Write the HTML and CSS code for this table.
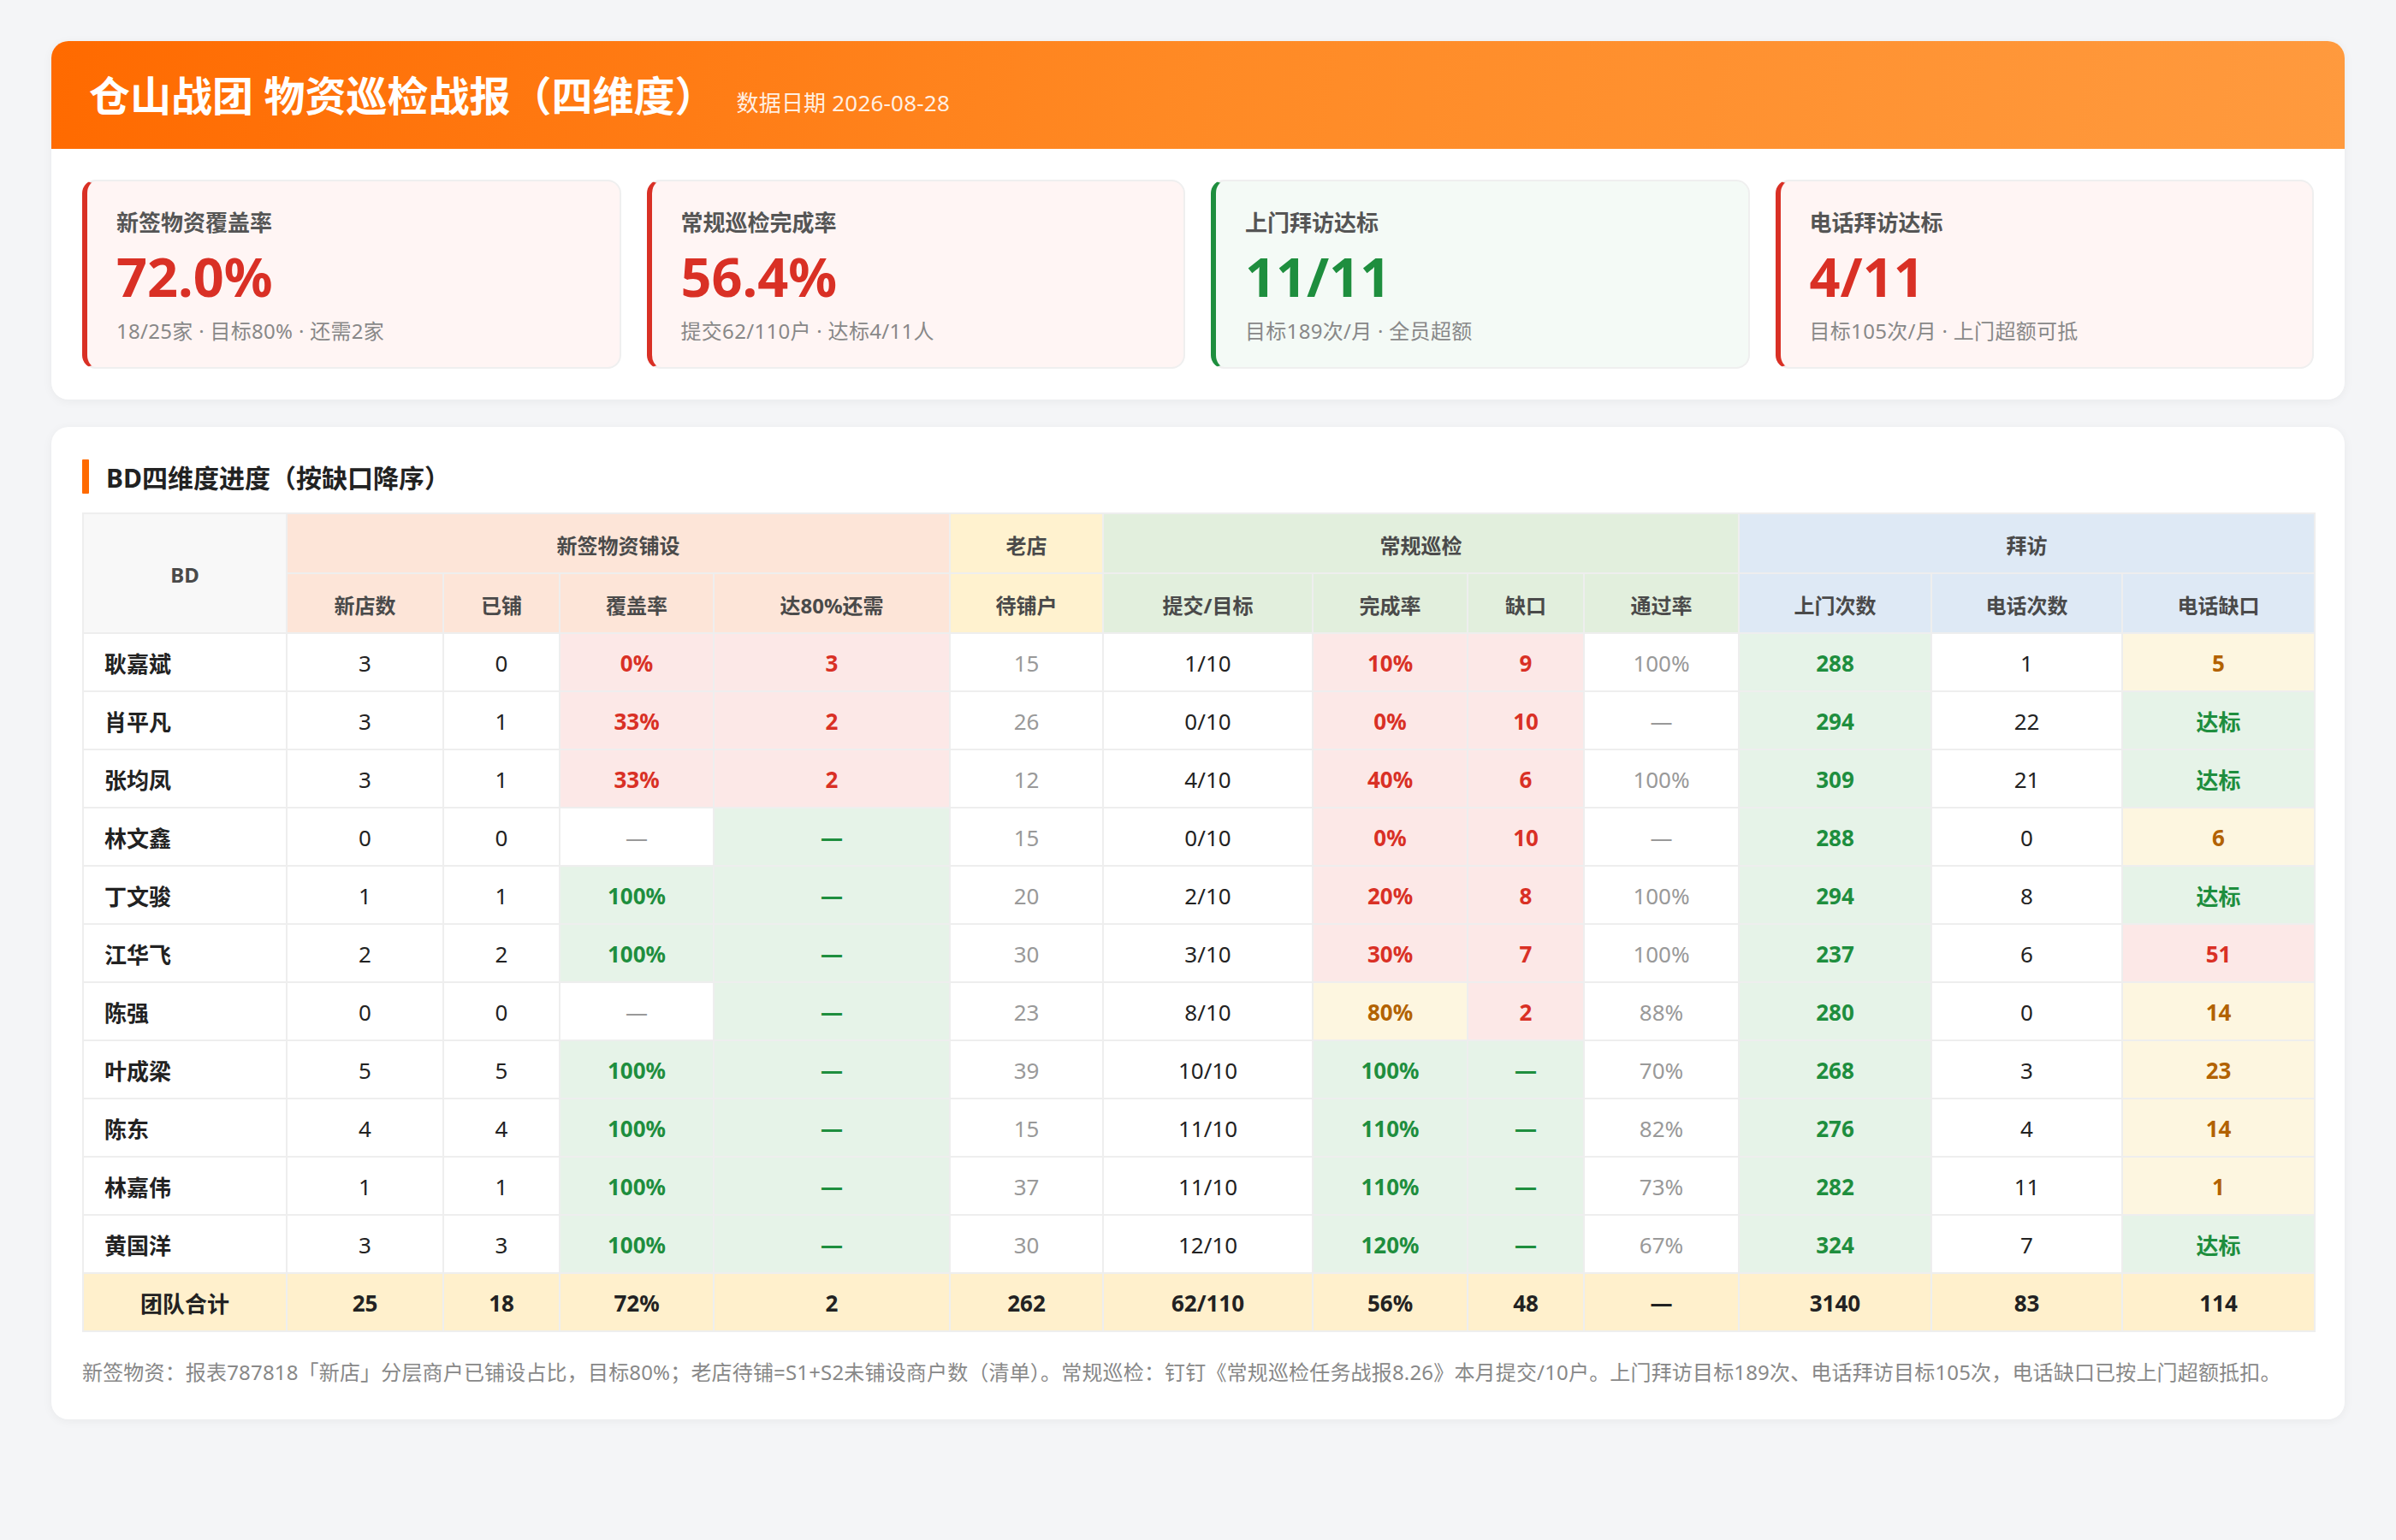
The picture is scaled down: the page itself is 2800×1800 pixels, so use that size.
FILE: index.html
```html
<!DOCTYPE html>
<html lang="zh-CN">
<head>
<meta charset="utf-8">
<title>仓山战团 物资巡检战报（四维度）</title>
<link rel="stylesheet" href="styles.css">
</head>
<body>
<div class="page">
  <section class="panel summary">
    <header class="hero">
      <h1 class="hero-title">仓山战团 物资巡检战报（四维度）</h1>
      <span class="hero-date">数据日期 2026-08-28</span>
    </header>
    <div class="kpis">
      <div class="kpi kpi-red">
        <div class="kpi-label">新签物资覆盖率</div>
        <div class="kpi-value">72.0%</div>
        <div class="kpi-sub">18/25家 · 目标80% · 还需2家</div>
      </div>
      <div class="kpi kpi-red">
        <div class="kpi-label">常规巡检完成率</div>
        <div class="kpi-value">56.4%</div>
        <div class="kpi-sub">提交62/110户 · 达标4/11人</div>
      </div>
      <div class="kpi kpi-green">
        <div class="kpi-label">上门拜访达标</div>
        <div class="kpi-value">11/11</div>
        <div class="kpi-sub">目标189次/月 · 全员超额</div>
      </div>
      <div class="kpi kpi-red">
        <div class="kpi-label">电话拜访达标</div>
        <div class="kpi-value">4/11</div>
        <div class="kpi-sub">目标105次/月 · 上门超额可抵</div>
      </div>
    </div>
  </section>

  <section class="panel detail">
    <h2 class="section-title"><span class="section-bar"></span>BD四维度进度（按缺口降序）</h2>
    <table class="grid">
      <colgroup>
        <col class="w-bd"><col class="w-new"><col class="w-done"><col class="w-cov"><col class="w-need">
        <col class="w-old"><col class="w-sub"><col class="w-rate"><col class="w-gap"><col class="w-pass">
        <col class="w-visit"><col class="w-call"><col class="w-callgap">
      </colgroup>
      <thead>
        <tr class="head-1">
          <th rowspan="2" class="h-bd">BD</th>
          <th colspan="4" class="h-new">新签物资铺设</th>
          <th class="h-old">老店</th>
          <th colspan="4" class="h-patrol">常规巡检</th>
          <th colspan="3" class="h-visit">拜访</th>
        </tr>
        <tr class="head-2">
          <th class="h-new">新店数</th>
          <th class="h-new">已铺</th>
          <th class="h-new">覆盖率</th>
          <th class="h-new">达80%还需</th>
          <th class="h-old">待铺户</th>
          <th class="h-patrol">提交/目标</th>
          <th class="h-patrol">完成率</th>
          <th class="h-patrol">缺口</th>
          <th class="h-patrol">通过率</th>
          <th class="h-visit">上门次数</th>
          <th class="h-visit">电话次数</th>
          <th class="h-visit">电话缺口</th>
        </tr>
      </thead>
      <tbody>
        <tr><td class="name">耿嘉斌</td><td>3</td><td>0</td><td class="bad">0%</td><td class="bad">3</td><td class="muted">15</td><td>1/10</td><td class="bad">10%</td><td class="bad">9</td><td class="muted">100%</td><td class="good">288</td><td>1</td><td class="warn">5</td></tr>
        <tr><td class="name">肖平凡</td><td>3</td><td>1</td><td class="bad">33%</td><td class="bad">2</td><td class="muted">26</td><td>0/10</td><td class="bad">0%</td><td class="bad">10</td><td class="muted">—</td><td class="good">294</td><td>22</td><td class="good">达标</td></tr>
        <tr><td class="name">张均凤</td><td>3</td><td>1</td><td class="bad">33%</td><td class="bad">2</td><td class="muted">12</td><td>4/10</td><td class="bad">40%</td><td class="bad">6</td><td class="muted">100%</td><td class="good">309</td><td>21</td><td class="good">达标</td></tr>
        <tr><td class="name">林文鑫</td><td>0</td><td>0</td><td class="muted">—</td><td class="good">—</td><td class="muted">15</td><td>0/10</td><td class="bad">0%</td><td class="bad">10</td><td class="muted">—</td><td class="good">288</td><td>0</td><td class="warn">6</td></tr>
        <tr><td class="name">丁文骏</td><td>1</td><td>1</td><td class="good">100%</td><td class="good">—</td><td class="muted">20</td><td>2/10</td><td class="bad">20%</td><td class="bad">8</td><td class="muted">100%</td><td class="good">294</td><td>8</td><td class="good">达标</td></tr>
        <tr><td class="name">江华飞</td><td>2</td><td>2</td><td class="good">100%</td><td class="good">—</td><td class="muted">30</td><td>3/10</td><td class="bad">30%</td><td class="bad">7</td><td class="muted">100%</td><td class="good">237</td><td>6</td><td class="bad">51</td></tr>
        <tr><td class="name">陈强</td><td>0</td><td>0</td><td class="muted">—</td><td class="good">—</td><td class="muted">23</td><td>8/10</td><td class="warn">80%</td><td class="bad">2</td><td class="muted">88%</td><td class="good">280</td><td>0</td><td class="warn">14</td></tr>
        <tr><td class="name">叶成梁</td><td>5</td><td>5</td><td class="good">100%</td><td class="good">—</td><td class="muted">39</td><td>10/10</td><td class="good">100%</td><td class="good">—</td><td class="muted">70%</td><td class="good">268</td><td>3</td><td class="warn">23</td></tr>
        <tr><td class="name">陈东</td><td>4</td><td>4</td><td class="good">100%</td><td class="good">—</td><td class="muted">15</td><td>11/10</td><td class="good">110%</td><td class="good">—</td><td class="muted">82%</td><td class="good">276</td><td>4</td><td class="warn">14</td></tr>
        <tr><td class="name">林嘉伟</td><td>1</td><td>1</td><td class="good">100%</td><td class="good">—</td><td class="muted">37</td><td>11/10</td><td class="good">110%</td><td class="good">—</td><td class="muted">73%</td><td class="good">282</td><td>11</td><td class="warn">1</td></tr>
        <tr><td class="name">黄国洋</td><td>3</td><td>3</td><td class="good">100%</td><td class="good">—</td><td class="muted">30</td><td>12/10</td><td class="good">120%</td><td class="good">—</td><td class="muted">67%</td><td class="good">324</td><td>7</td><td class="good">达标</td></tr>
        <tr class="total"><td>团队合计</td><td>25</td><td>18</td><td>72%</td><td>2</td><td>262</td><td>62/110</td><td>56%</td><td>48</td><td>—</td><td>3140</td><td>83</td><td>114</td></tr>
      </tbody>
    </table>
    <p class="note">新签物资：报表787818「新店」分层商户已铺设占比，目标80%；老店待铺=S1+S2未铺设商户数（清单）。常规巡检：钉钉《常规巡检任务战报8.26》本月提交/10户。上门拜访目标189次、电话拜访目标105次，电话缺口已按上门超额抵扣。</p>
  </section>
</div>
</body>
</html>
```

FILE: styles.css
```css
* { box-sizing: border-box; }

html, body {
  margin: 0;
  padding: 0;
  background: #f4f5f7;
}

body {
  font-family: "Noto Sans", "Open Sans", "Noto Sans CJK SC", sans-serif;
  color: #222;
  min-height: 1800px;
}

.page {
  padding: 48px 60px;
  display: flex;
  flex-direction: column;
  gap: 32px;
}

.panel {
  background: #fff;
  border-radius: 20px;
  box-shadow: 0 2px 12px rgba(0, 0, 0, 0.05);
  overflow: hidden;
}

/* hero */
.hero {
  height: 126px;
  padding: 32px 44px 0;
  display: flex;
  align-items: baseline;
  gap: 24px;
  background: linear-gradient(100deg, #ff6a00 0%, #ff8a25 50%, #ff9a3e 100%);
  color: #fff;
}

.hero-title {
  margin: 0;
  font-size: 48px;
  line-height: 64px;
  font-weight: 700;
  letter-spacing: 0;
}

.hero-date {
  font-size: 26px;
  letter-spacing: 0.2px;
  color: rgba(255, 255, 255, 0.9);
}

/* kpis */
.kpis {
  padding: 36px;
  display: grid;
  grid-template-columns: repeat(4, 1fr);
  gap: 30px;
}

.kpi {
  border: 2px solid #efefef;
  border-left-width: 6px;
  border-radius: 16px;
  padding: 30px 32px 24px 34px;
}

.kpi-red {
  border-left-color: #d93025;
  background: #fff5f4;
}

.kpi-green {
  border-left-color: #1e8e3e;
  background: #f4faf6;
}

.kpi-label {
  font-size: 26px;
  line-height: 36px;
  font-weight: 700;
  color: #555;
}

.kpi-value {
  margin-top: 6px;
  font-size: 63px;
  line-height: 77px;
  font-weight: 700;
}

.kpi-red .kpi-value { color: #d93025; }
.kpi-green .kpi-value { color: #1e8e3e; }

.kpi-sub {
  margin-top: 8px;
  font-size: 24px;
  line-height: 36px;
  letter-spacing: 0.3px;
  color: #888;
}

/* detail */
.detail {
  padding: 36px;
}

.section-title {
  margin: 0 0 20px;
  height: 44px;
  display: flex;
  align-items: center;
  gap: 20px;
  font-size: 30px;
  font-weight: 700;
  color: #222;
}

.section-bar {
  width: 8px;
  height: 40px;
  background: #ff6a00;
  border-radius: 1px;
}

.grid {
  width: 100%;
  border-collapse: collapse;
  table-layout: fixed;
  font-size: 26px;
}

.w-bd { width: 238px; }
.w-new { width: 183px; }
.w-done { width: 136px; }
.w-cov { width: 180px; }
.w-need { width: 276px; }
.w-old { width: 179px; }
.w-sub { width: 245px; }
.w-rate { width: 181px; }
.w-gap { width: 136px; }
.w-pass { width: 181px; }
.w-visit { width: 225px; }
.w-call { width: 223px; }
.w-callgap { width: 225px; }

.grid th,
.grid td {
  border: 2px solid #eeeeee;
  text-align: center;
  vertical-align: middle;
  padding: 2px 8px 0;
}

.grid th {
  font-size: 24px;
  font-weight: 700;
  color: #4a4a4a;
}

.head-1 { height: 70px; }
.head-2 { height: 70px; }

.h-bd { background: #f8f8f8; }
.h-new { background: #fde5d8; }
.h-old { background: #fff2cf; }
.h-patrol { background: #e2efdd; }
.h-visit { background: #dee9f5; }

.grid tbody tr { height: 68px; }

.grid td {
  color: #222;
}

.grid td.name {
  text-align: left;
  padding-left: 24px;
  font-weight: 700;
}

.grid td.muted { color: #999; }

.grid td.bad {
  background: #fce8e7;
  color: #d93025;
  font-weight: 700;
}

.grid td.good {
  background: #e6f3e8;
  color: #1e8e3e;
  font-weight: 700;
}

.grid td.warn {
  background: #fdf6e0;
  color: #b26200;
  font-weight: 700;
}

.grid tr.total td {
  background: #fff0cc;
  font-weight: 700;
  color: #222;
}

.note {
  margin: 28px 0 0;
  font-size: 24px;
  line-height: 38px;
  letter-spacing: 0.17px;
  color: #888;
}
```
